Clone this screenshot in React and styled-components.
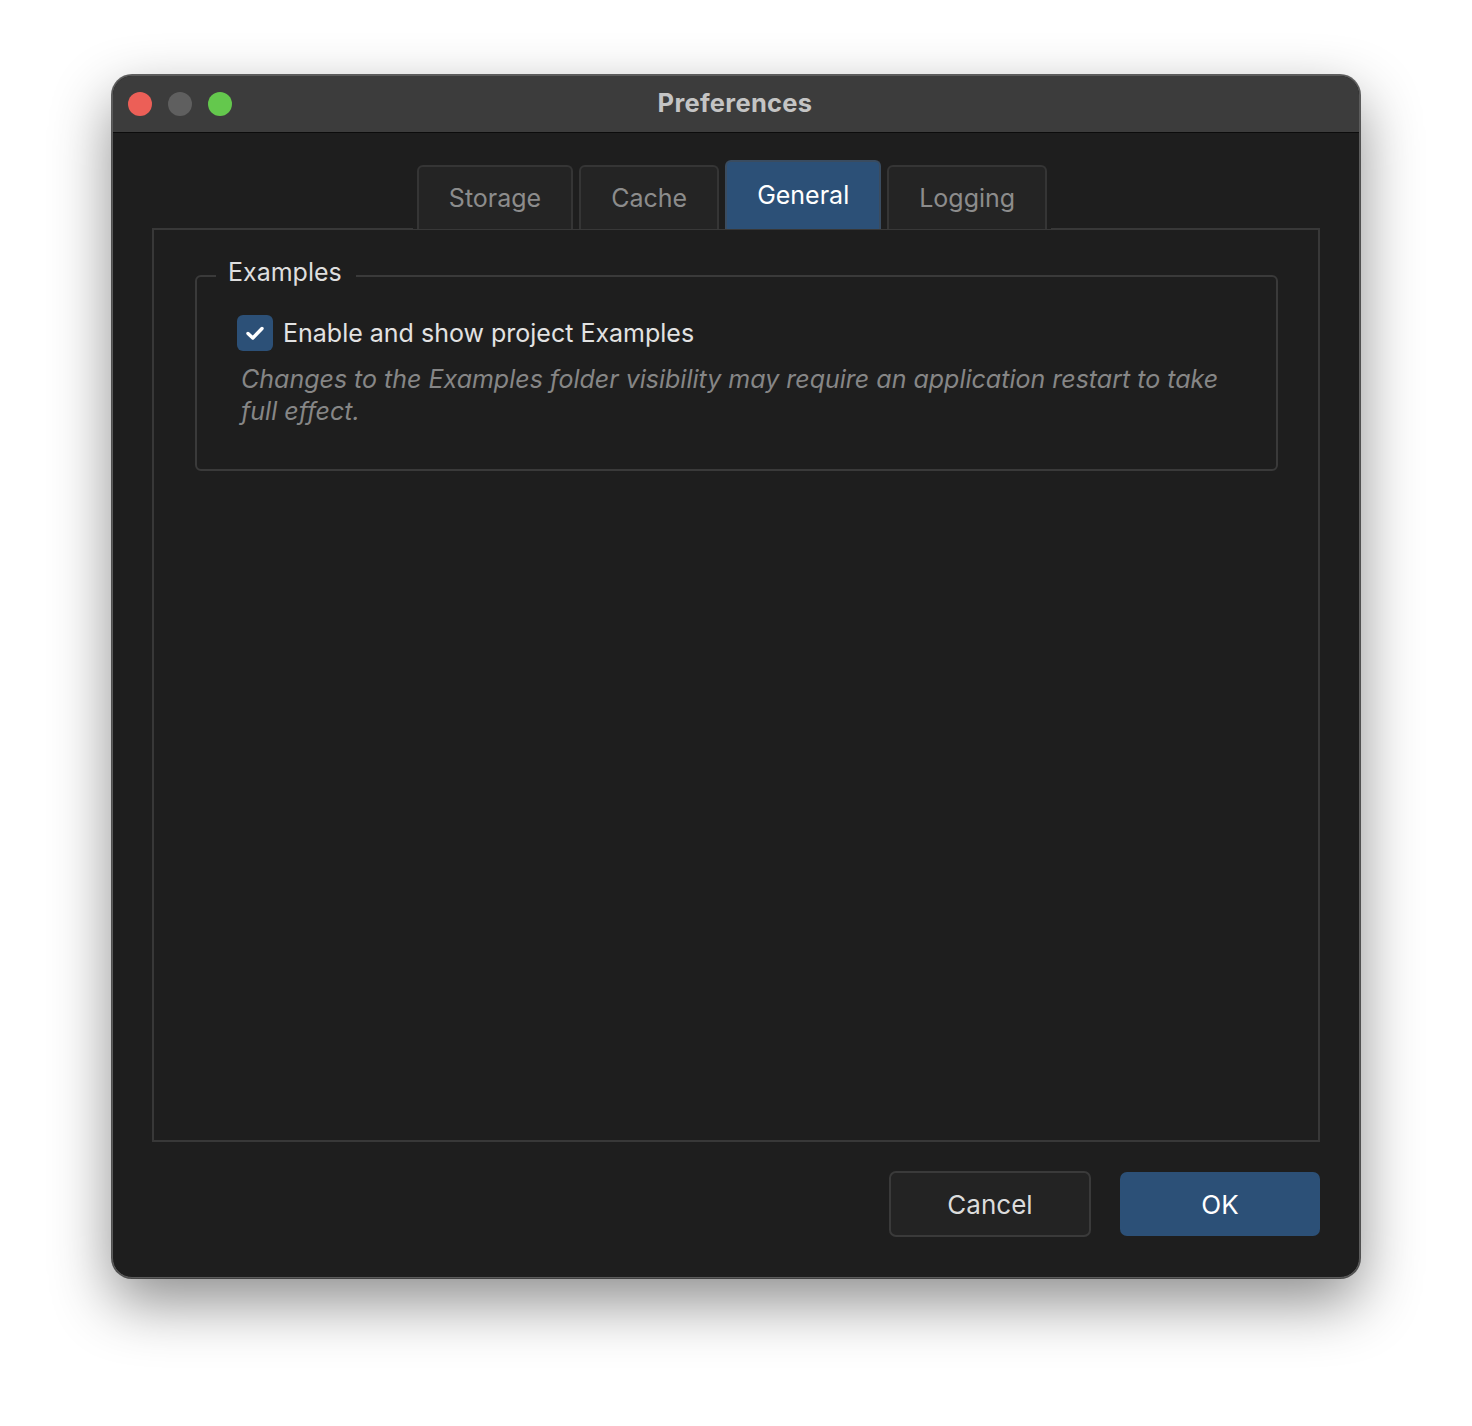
import React from "react";
import styled, { createGlobalStyle } from "styled-components";

const Global = createGlobalStyle`
  html, body {
    margin: 0;
    padding: 0;
    background: #ffffff;
  }
  body {
    font-family: Inter, "Noto Sans", "Liberation Sans", sans-serif;
    -webkit-font-smoothing: antialiased;
  }
`;

const TABS = ["Storage", "Cache", "General", "Logging"];
const ACTIVE = "General";

function TrafficLights() {
  return (
    <Lights>
      <Light color="#ec5f57" />
      <Light color="#5f5f5f" />
      <Light color="#64c84d" />
    </Lights>
  );
}

function Check() {
  return (
    <CheckBox>
      <svg width="24" height="24" viewBox="0 0 24 24">
        <polyline
          points="5,12.5 9.8,17 19,7.5"
          fill="none"
          stroke="#ffffff"
          strokeWidth="3.4"
          strokeLinecap="round"
          strokeLinejoin="round"
        />
      </svg>
    </CheckBox>
  );
}

export default function App() {
  return (
    <Page>
      <Global />
      <Window>
        <TitleBar>
          <TrafficLights />
          <Title>Preferences</Title>
        </TitleBar>
        <Body>
          <TabRow>
            {TABS.map((t) => (
              <Tab key={t} active={t === ACTIVE}>
                {t}
              </Tab>
            ))}
          </TabRow>
          <Panel>
            <Group>
              <Legend>Examples</Legend>
              <CheckRow>
                <Check />
                <CheckLabel>Enable and show project Examples</CheckLabel>
              </CheckRow>
              <Hint>
                Changes to the Examples folder visibility may require an
                application restart to take full effect.
              </Hint>
            </Group>
          </Panel>
          <Footer>
            <Button>Cancel</Button>
            <Button primary>OK</Button>
          </Footer>
        </Body>
      </Window>
    </Page>
  );
}

const Page = styled.div`
  padding: 75px 112px 148px;
  min-height: 1426px;
  box-sizing: border-box;
`;

const Window = styled.div`
  width: 1248px;
  height: 1203px;
  box-sizing: border-box;
  border-radius: 20px;
  border: 1px solid #5c5c5c;
  background: #1e1e1e;
  overflow: hidden;
  display: flex;
  flex-direction: column;
  box-shadow: 0 24px 60px rgba(0, 0, 0, 0.45), 0 0 0 1px rgba(0, 0, 0, 0.6);
`;

const TitleBar = styled.div`
  height: 56px;
  flex: none;
  background: #3c3c3c;
  border-bottom: 1px solid #0c0c0c;
  display: flex;
  align-items: center;
  justify-content: center;
  position: relative;
`;

const Lights = styled.div`
  position: absolute;
  left: 15px;
  top: 16px;
  display: flex;
  gap: 16px;
`;

const Light = styled.span`
  width: 24px;
  height: 24px;
  border-radius: 50%;
  background: ${(p) => p.color};
`;

const Title = styled.div`
  color: #c4c4c4;
  font-weight: 700;
  font-size: 25.5px;
  letter-spacing: 0.3px;
  margin-right: 2px;
  margin-top: -3px;
`;

const Body = styled.div`
  flex: 1;
  display: flex;
  flex-direction: column;
  padding: 27px 39px 40px 39px;
`;

const TabRow = styled.div`
  align-self: center;
  display: flex;
  align-items: flex-end;
  gap: 6px;
  margin-bottom: -1px;
  margin-right: 8px;
  padding: 0 4px;
  background: #1e1e1e;
  position: relative;
  z-index: 1;
  height: 69px;
`;

const Tab = styled.div`
  height: ${(p) => (p.active ? "69px" : "64px")};
  box-sizing: border-box;
  padding: 0 30px;
  padding-bottom: ${(p) => (p.active ? "1px" : "0")};
  display: flex;
  align-items: center;
  border: 2px solid ${(p) => (p.active ? "#3a4c60" : "#353535")};
  border-bottom: none;
  border-radius: 6px 6px 0 0;
  background: ${(p) => (p.active ? "#2c5077" : "#242424")};
  color: ${(p) => (p.active ? "#ffffff" : "#8c8c8c")};
  font-size: 25px;
`;

const Panel = styled.div`
  flex: 1;
  border: 2px solid #383838;
  padding: 27px 40px 0 41px;
`;

const Group = styled.fieldset`
  margin: 0;
  padding: 20px 40px 42px 40px;
  border: 2px solid #3a3a3a;
  border-radius: 6px;
`;

const Legend = styled.legend`
  margin-left: -21px;
  padding: 0 14px 8px 12px;
  color: #dedede;
  font-size: 25px;
  line-height: 30px;
`;

const CheckRow = styled.div`
  display: flex;
  align-items: center;
  gap: 10px;
`;

const CheckBox = styled.span`
  width: 36px;
  height: 36px;
  border-radius: 6px;
  background: #2c5077;
  display: flex;
  align-items: center;
  justify-content: center;
`;

const CheckLabel = styled.span`
  color: #e2e2e2;
  font-size: 25px;
`;

const Hint = styled.p`
  margin: 12px 0 0 4px;
  color: #868686;
  font-style: italic;
  font-size: 25px;
  line-height: 32px;
  max-width: 990px;
`;

const Footer = styled.div`
  display: flex;
  justify-content: flex-end;
  align-items: center;
  gap: 29px;
  padding-top: 29px;
`;

const Button = styled.div`
  flex: none;
  width: ${(p) => (p.primary ? "200px" : "202px")};
  height: ${(p) => (p.primary ? "64px" : "66px")};
  box-sizing: border-box;
  border-radius: 7px;
  border: ${(p) => (p.primary ? "none" : "2px solid #3a3a3a")};
  background: ${(p) => (p.primary ? "#2c5077" : "#232323")};
  color: ${(p) => (p.primary ? "#ffffff" : "#dcdcdc")};
  font-size: 26px;
  display: flex;
  align-items: center;
  justify-content: center;
`;
